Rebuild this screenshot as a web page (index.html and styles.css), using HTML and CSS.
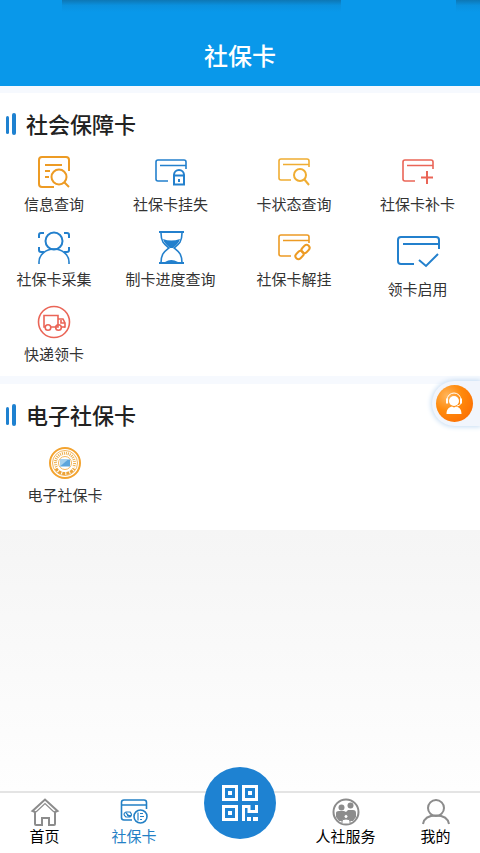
FILE: index.html
```html
<!DOCTYPE html>
<html lang="zh-CN">

<head>
    <meta charset="UTF-8">
    <meta name="viewport" content="width=device-width, initial-scale=1.0">
    <title>社保卡</title>
    <link rel="stylesheet" href="styles.css">
</head>

<body>
    <header class="header">
        <h1>社保卡</h1>
    </header>

    <main class="content">
        <!-- Social security card -->
        <section class="card">
            <h2>社会保障卡</h2>
            <div class="menu">
                <a href="#info" class="item orange">
                    <svg class="icon" viewBox="0 0 32 32">
                        <path d="M31 15V4a3 3 0 0 0-3-3H4a3 3 0 0 0-3 3v24a3 3 0 0 0 3 3h12" />
                        <path d="M7 9h17M7 15h5M7 21h4" />
                        <circle cx="21" cy="21" r="7.5" />
                        <path d="M26 26l5 5" />
                    </svg>
                    <span>信息查询</span>
                </a>
                <a href="#loss" class="item blue">
                    <svg class="icon" viewBox="0 0 32 32">
                        <path class="line" d="M13 25H3a2 2 0 0 1-2-2V6a2 2 0 0 1 2-2h26a2 2 0 0 1 2 2v7M5 9.500h26" />
                        <path d="M19 20v-1a5 5 0 0 1 10 0v1M19 19.500h10v9h-10zM24 23v3" />
                    </svg>
                    <span>社保卡挂失</span>
                </a>
                <a href="#status" class="item yellow">
                    <svg class="icon" viewBox="0 0 32 32">
                        <path class="line" d="M13 24H3a2 2 0 0 1-2-2V5a2 2 0 0 1 2-2h26a2 2 0 0 1 2 2v6M5 8.500h26" />
                        <circle cx="22" cy="19" r="6" />
                        <path d="M26 23l5 6" />
                    </svg>
                    <span>卡状态查询</span>
                </a>
                <a href="#reissue" class="item red">
                    <svg class="icon" viewBox="0 0 32 32">
                        <path class="line" d="M13 25H3a2 2 0 0 1-2-2V6a2 2 0 0 1 2-2h26a2 2 0 0 1 2 2v7M5 9.500h26" />
                        <path d="M25 15v13M19 21.500h12" />
                    </svg>
                    <span>社保卡补卡</span>
                </a>
                <a href="#collect" class="item blue">
                    <svg class="icon" viewBox="0 0 32 32">
                        <circle cx="16" cy="10" r="8.500" />
                        <path class="line" d="M1 33v-2a15 13 0 0 1 30 0v2" />
                        <path d="M1 7V4a2 2 0 0 1 2-2h3M26 2h3a2 2 0 0 1 2 2v3M1 16v3a2 2 0 0 0 2 2h3M26 21h3a2 2 0 0 0 2-2v-3" />
                    </svg>
                    <span>社保卡采集</span>
                </a>
                <a href="#progress" class="item blue">
                    <svg class="icon" viewBox="0 0 32 32">
                        <path d="M4 1h25M4 32h25" />
                        <path class="line" d="M6 2c0 9 3 11 8 15-5 4-8 6-8 15M27 2c0 9-3 11-8 15 5 4 8 6 8 15" />
                        <path class="fill" d="M8 8q8 3 17 0c-1 4-4 6-7 9h-3c-3-3-6-5-7-9zM10 31q6-4 13 0z" />
                    </svg>
                    <span>制卡进度查询</span>
                </a>
                <a href="#unhook" class="item orange">
                    <svg class="icon" viewBox="0 0 32 32">
                        <path class="line" d="M13 25H3a2 2 0 0 1-2-2V6a2 2 0 0 1 2-2h26a2 2 0 0 1 2 2v6M5 9.500h26" />
                        <rect x="17" y="21" width="9" height="6" rx="3" transform="rotate(-45 21.500 24)" />
                        <rect x="23" y="15" width="9" height="6" rx="3" transform="rotate(-45 27.500 18)" />
                    </svg>
                    <span>社保卡解挂</span>
                </a>
                <a href="#enable" class="item blue">
                    <svg class="icon large" viewBox="0 0 42 42">
                        <path d="M17 33H4a3 3 0 0 1-3-3V9a3 3 0 0 1 3-3h35a3 3 0 0 1 3 3v9M6 13h35" />
                        <path d="M22 29l7 6 12-12" />
                    </svg>
                    <span>领卡启用</span>
                </a>
                <a href="#express" class="item red">
                    <svg class="icon" viewBox="0 0 32 32">
                        <circle class="line" cx="16" cy="16" r="15.500" />
                        <path class="line" d="M7 21H6V9.500h14V21h-7M20 13h5l2 4v4h-1M23 14v3h4" />
                        <circle class="line" cx="10" cy="21.500" r="2.800" />
                        <circle class="line" cx="20.500" cy="21.500" r="2.800" />
                        <path class="line" d="M23 21h4" />
                    </svg>
                    <span>快递领卡</span>
                </a>
            </div>
        </section>

        <!-- Electronic card -->
        <section class="card">
            <h2>电子社保卡</h2>
            <div class="menu menu-single">
                <a href="#ecard" class="item orange">
                    <svg class="icon" viewBox="0 0 32 32">
                        <circle class="seal-edge" cx="16" cy="16" r="15" />
                        <circle class="seal-ring" cx="16" cy="16" r="12.500" />
                        <path class="seal-top" d="M7.500 20a9.500 9.500 0 1 1 17 0" />
                        <path class="seal-bottom" d="M7 21.500a10.500 10.500 0 0 0 18 0" />
                        <circle class="seal-ring" cx="16" cy="16" r="6.500" />
                        <rect class="seal-card" x="11" y="12.500" width="10" height="7" />
                        <path class="seal-shine" d="M11 19.500l8-7h-8z" />
                    </svg>
                    <span>电子社保卡</span>
                </a>
            </div>
        </section>
    </main>

    <!-- Customer service -->
    <button class="service" type="button" aria-label="客服">
        <span class="service-ball">
            <svg viewBox="0 0 37 37">
                <circle class="face" cx="18" cy="16" r="5" />
                <path class="face" d="M10.500 29c0-5 3-7 5.500-7.500l2 1 2-1c3 .5 5.500 2.500 5.500 7.500z" />
                <path class="band" d="M11 15a7 7 0 0 1 14 0" />
                <path class="ear" d="M11 13.500v5M25 13.500v5" />
                <path class="band" d="M25 18q-1 3-4 3" />
            </svg>
        </span>
    </button>

    <!-- Bottom navigation -->
    <nav class="tabbar">
        <a href="#home" class="tab">
            <svg viewBox="0 0 28 28">
                <path d="M4 14l-2.500-1L14 1.500 26.500 13 24 14v12a1 1 0 0 1-1 1h-5v-7h-7v7H5a1 1 0 0 1-1-1z" />
                <path class="thin" d="M5 14l9-8.500 9 8.500" />
            </svg>
            <span>首页</span>
        </a>
        <a href="#card" class="tab active">
            <svg viewBox="0 0 28 28">
                <path class="line" d="M12 22H4a2.500 2.500 0 0 1-2.500-2.500v-15A2.500 2.500 0 0 1 4 2h20a2.500 2.500 0 0 1 2.500 2.500V11M2 7h24" />
                <circle class="line" cx="20.500" cy="18.500" r="6.500" />
                <path class="thin" d="M18 14.500v8M20 15.500h3M20 18.500h4M20 21.500h2M10 14H6q-4 2 0 5h4q3-2 0-5zM6 15l4 4M7 17.500h4" />
            </svg>
            <span>社保卡</span>
        </a>
        <a href="#scan" class="scan" aria-label="二维码">
            <svg viewBox="0 0 36 36">
                <path d="M1.500 1.500h13v13h-13zM21.500 1.500h13v13h-13zM1.500 21.500h13v13h-13z" />
                <path class="dot" d="M6 6h4v4H6zM26 6h4v4h-4zM6 26h4v4H6z" />
                <path d="M21.500 36V21.500H27v5h7.500V20" />
                <path class="dot" d="M25 32h4v4h-4zM31 32h5v4h-5z" />
            </svg>
        </a>
        <a href="#service" class="tab">
            <svg viewBox="0 0 28 28">
                <circle cx="14" cy="14" r="12.500" />
                <g class="people">
                    <circle cx="9.500" cy="9.500" r="3" />
                    <circle cx="18.500" cy="7.500" r="3" />
                    <path d="M4 15q0-2 3-2h5l2 1 2-2h5q3 0 3 3v4l-3 4H7l-3-4z" />
                </g>
                <g class="child">
                    <circle cx="14" cy="18.500" r="2" />
                    <path d="M10 26v-3q0-2 4-2t4 2v3z" />
                </g>
            </svg>
            <span>人社服务</span>
        </a>
        <a href="#mine" class="tab">
            <svg viewBox="0 0 28 28">
                <circle cx="14" cy="10" r="8" />
                <path d="M1 26c1-6 6-8.500 13-8.500S26 20 27 26" />
            </svg>
            <span>我的</span>
        </a>
    </nav>
</body>

</html>
```
FILE: styles.css
```css
* {
    box-sizing: border-box;
}

body {
    margin: 0;
    min-height: 100vh;
    display: flex;
    flex-direction: column;
    font-family: "Noto Sans CJK SC", "Noto Sans", sans-serif;
    color: #333;
    background: #fff;
}

a {
    text-decoration: none;
    color: inherit;
}

svg {
    display: block;
    overflow: visible;
    fill: none;
    stroke: currentColor;
    stroke-width: 2;
}

.header {
    position: relative;
    padding: 26px 0 2px;
    background-color: #0998ea;
    color: #fff;
    text-align: center;
}

.header h1 {
    margin: 0;
    font-size: 24px;
    line-height: 58px;
    font-weight: 500;
}

/* soft shade under the status bar */
.header::before,
.header::after {
    content: "";
    position: absolute;
    top: 0;
    height: 12px;
    background: linear-gradient(rgba(20, 70, 100, 0.4), rgba(20, 90, 140, 0.12) 45%, transparent);
}

.header::before {
    left: 13%;
    width: 58%;
}

.header::after {
    right: 0;
    width: 5%;
}

.content {
    flex: 1;
    padding-top: 7px;
    background: linear-gradient(#f6f9fe 384px, #f5f5f5 444px, #fefefe);
}

.card {
    background-color: #fff;
}

.card + .card {
    margin-top: 8px;
    padding-bottom: 13px;
}

.card h2 {
    display: flex;
    align-items: center;
    margin: 0;
    padding: 0 0 4px 6px;
    height: 63px;
    font-size: 22px;
    font-weight: 500;
    color: #222;
}

/* the two blue bars before a title */
.card h2::before,
.card h2::after {
    content: "";
    border-radius: 2px;
    background-color: #1e81d0;
}

.card h2::before {
    order: -2;
    width: 3px;
    height: 18px;
    margin: 4px 3px 0 0;
}

.card h2::after {
    order: -1;
    width: 4px;
    height: 22px;
    margin: 2px 10px 0 0;
}

.menu {
    display: grid;
    grid-template-columns: 108fr 125fr 122fr 125fr;
    grid-auto-rows: minmax(70px, auto);
    row-gap: 5px;
}

.menu-single {
    grid-template-columns: 130fr 350fr;
}

.item {
    display: flex;
    flex-direction: column;
    align-items: center;
    gap: 6px;
    font-size: 15px;
    line-height: 20px;
}

.icon {
    width: 32px;
    height: 32px;
}

.icon.large {
    width: 42px;
    height: 42px;
}

.item span {
    color: #333;
}

.orange {
    color: #ed9b24;
}

.yellow {
    color: #f0ad32;
}

.red {
    color: #ea6557;
}

.blue {
    color: #2380cd;
}

.line {
    stroke-width: 1.6;
}

.fill {
    fill: currentColor;
    stroke: none;
}

.seal-edge {
    stroke: #f3a32f;
}

.seal-ring {
    stroke: #f3b65c;
    stroke-width: 1;
}

.seal-top {
    stroke: #eeb04f;
    stroke-width: 3;
    stroke-dasharray: 1 1;
}

.seal-bottom {
    stroke: #eda336;
    stroke-width: 3;
    stroke-dasharray: 3 1;
}

.seal-card {
    fill: #5ba5dc;
    stroke: none;
}

.seal-shine {
    fill: #a4d0ed;
    stroke: none;
}

.service {
    position: fixed;
    top: 381px;
    right: 0;
    padding: 4px 7px 4px 4px;
    border: none;
    border-radius: 23px 0 0 23px;
    background-color: #f1f5fc;
    box-shadow: 0 0 5px 1px #c5dcf3;
    cursor: pointer;
}

.service-ball {
    display: block;
    width: 37px;
    height: 37px;
    border-radius: 50%;
    background: radial-gradient(circle at 30% 30%, #ffb65c, #ff8a0c 40%, #fb6400);
}

.face {
    fill: #fff;
    stroke: none;
}

.band {
    stroke: #fff;
    stroke-width: 1;
}

.ear {
    stroke: #fff;
    stroke-width: 2;
}

.tabbar {
    position: sticky;
    bottom: 0;
    display: grid;
    grid-template-columns: 89fr 90fr 121fr 91fr 89fr;
    height: 62px;
    border-top: 2px solid #e4e4e4;
    background-color: #fff;
}

.tab {
    display: flex;
    flex-direction: column;
    align-items: center;
    padding-top: 5px;
    font-size: 15px;
    line-height: 20px;
    color: #000;
}

.tab svg {
    width: 28px;
    height: 28px;
    color: #8c8c8c;
}

.tab.active,
.tab.active svg {
    color: #2380c5;
}

.thin {
    stroke-width: 1.2;
}

.people {
    fill: #8c8c8c;
    stroke: none;
}

.child {
    fill: #fff;
    stroke: #8c8c8c;
    stroke-width: 1;
}

.scan {
    display: flex;
    align-items: center;
    justify-content: center;
    justify-self: center;
    width: 72px;
    height: 72px;
    margin-top: -26px;
    border-radius: 50%;
    background-color: #1e82d2;
    color: #fff;
}

.scan svg {
    width: 36px;
    height: 36px;
    stroke-width: 3;
}

.dot {
    fill: currentColor;
    stroke: none;
}
```
